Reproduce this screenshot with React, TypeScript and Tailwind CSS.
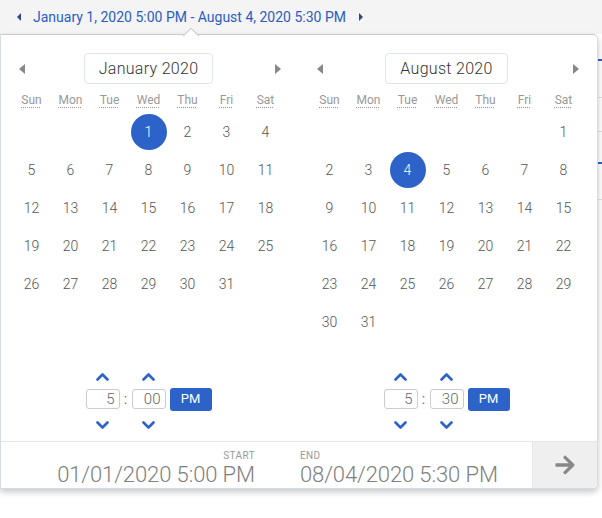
import React from 'react';
import { FaArrowRight } from 'react-icons/fa';

const BLUE = '#2d62c8';

function Caret({ dir, color, w = 5, h = 9 }: { dir: 'left' | 'right'; color: string; w?: number; h?: number }) {
  const pts = dir === 'left' ? `${w},0 0,${h / 2} ${w},${h}` : `0,0 ${w},${h / 2} 0,${h}`;
  return (
    <svg width={w} height={h} viewBox={`0 0 ${w} ${h}`}>
      <polygon points={pts} fill={color} />
    </svg>
  );
}

function Chevron({ up }: { up?: boolean }) {
  return (
    <svg width="13" height="9" viewBox="0 0 13 9">
      <polyline
        points={up ? '1.5,7.5 6.5,2.5 11.5,7.5' : '1.5,1.5 6.5,6.5 11.5,1.5'}
        fill="none"
        stroke={BLUE}
        strokeWidth="2.6"
        strokeLinecap="round"
        strokeLinejoin="round"
      />
    </svg>
  );
}

const DAYS = ['Sun', 'Mon', 'Tue', 'Wed', 'Thu', 'Fri', 'Sat'];

function Calendar({
  title,
  offset,
  count,
  selected,
  hour,
  minute,
}: {
  title: string;
  offset: number;
  count: number;
  selected: number;
  hour: string;
  minute: string;
}) {
  const cells: (number | null)[] = [];
  for (let i = 0; i < offset; i++) cells.push(null);
  for (let d = 1; d <= count; d++) cells.push(d);
  return (
    <div className="w-[299px] pl-[11px] pt-[18px] flex flex-col">
      <div className="w-[273px] h-[31px] flex items-center justify-between">
        <div className="w-[20px] flex justify-center">
          <Caret dir="left" color="#888" w={6} h={10} />
        </div>
        <div className="h-[31px] px-[14px] flex items-center border border-[#dfe5ec] rounded-[4px] text-[16px] font-light text-[#333] tracking-[0.3px]">
          {title}
        </div>
        <div className="w-[20px] flex justify-center pl-[6px]">
          <Caret dir="right" color="#888" w={6} h={10} />
        </div>
      </div>
      <div className="w-[273px] h-[29px] grid grid-cols-7 items-center">
        {DAYS.map((d) => (
          <div key={d} className="flex justify-center pt-[2px]">
            <span className="text-[12px] text-[#999] underline decoration-dotted underline-offset-[3px]">{d}</span>
          </div>
        ))}
      </div>
      <div className="w-[273px] h-[228px] grid grid-cols-7 auto-rows-[38px]">
        {cells.map((c, i) => (
          <div key={i} className="flex items-center justify-center">
            {c !== null &&
              (c === selected ? (
                <span className="w-[36px] h-[36px] rounded-full bg-[#2d62c8] text-white text-[14px] font-light flex items-center justify-center">
                  {c}
                </span>
              ) : (
                <span className="text-[14px] font-light text-[#555]">{c}</span>
              ))}
          </div>
        ))}
      </div>
      <div className="w-[273px] mt-[27px] flex flex-col items-center">
        <div className="flex items-center h-[16px]">
          <div className="w-[34px] flex justify-center">
            <Chevron up />
          </div>
          <div className="w-[12px]" />
          <div className="w-[34px] flex justify-center">
            <Chevron up />
          </div>
          <div className="w-[46px]" />
        </div>
        <div className="flex items-center h-[24px] mt-[3px]">
          <div className="w-[34px] h-[20px] border border-[#ccc] rounded-[3px] text-[15px] font-light text-[#666] text-right pr-[4px] leading-[18px]">
            {hour}
          </div>
          <div className="w-[12px] text-center text-[14px] text-[#666]">:</div>
          <div className="w-[34px] h-[20px] border border-[#ccc] rounded-[3px] text-[15px] font-light text-[#666] text-right pr-[4px] leading-[18px]">
            {minute}
          </div>
          <div className="ml-[4px] w-[42px] h-[23px] rounded-[3px] bg-[#2d62c8] text-white text-[13px] flex items-center justify-center">
            PM
          </div>
        </div>
        <div className="flex items-center h-[16px] mt-[6px]">
          <div className="w-[34px] flex justify-center">
            <Chevron />
          </div>
          <div className="w-[12px]" />
          <div className="w-[34px] flex justify-center">
            <Chevron />
          </div>
          <div className="w-[46px]" />
        </div>
      </div>
    </div>
  );
}

export default function App() {
  return (
    <div className="relative w-[602px] h-[518px] bg-white overflow-hidden" style={{ fontFamily: 'Roboto, "Noto Sans", sans-serif' }}>
      <div className="h-[34px] bg-[#f4f4f4] flex items-center pl-[17px]">
        <Caret dir="left" color="#2a4a86" w={4} h={8} />
        <span className="ml-[12px] text-[14px] text-[#2b5cc4]">January 1, 2020 5:00 PM - August 4, 2020 5:30 PM</span>
        <span className="ml-[13px]">
          <Caret dir="right" color="#2a4a86" w={4} h={8} />
        </span>
      </div>

      {/* background content peeking on the right */}
      <div className="absolute left-[590px] top-[59px] w-[12px] h-[2px] bg-[#2d62c8]" />
      <div className="absolute left-[590px] top-[97px] w-[12px] h-[1px] bg-[#dde2e8]" />
      <div className="absolute left-[590px] top-[131px] w-[12px] h-[1px] bg-[#dde2e8]" />
      <div className="absolute left-[590px] top-[162px] w-[12px] h-[2px] bg-[#2d62c8]" />
      <div className="absolute left-[590px] top-[199px] w-[12px] h-[1px] bg-[#dde2e8]" />

      {/* popover */}
      <div className="absolute left-0 top-[34px] w-[598px] bg-white border border-[#d6dce4] border-t-[#c9c9c9] rounded-r-[5px] shadow-[0_3px_6px_rgba(0,0,0,0.22)]">
        <div className="absolute left-[182px] top-[-7px] w-[16px] h-[8px] overflow-hidden">
          <div className="w-[12px] h-[12px] bg-white border border-[#c9c9c9] rotate-45 translate-x-[2px] translate-y-[2px]" />
        </div>
        <div className="flex">
          <Calendar title="January 2020" offset={3} count={31} selected={1} hour="5" minute="00" />
          <Calendar title="August 2020" offset={6} count={31} selected={4} hour="5" minute="30" />
        </div>
        <div className="mt-[8px] h-[47px] border-t border-[#e3e8ef] flex">
          <div className="w-[254px] flex flex-col items-end pt-[8px]">
            <span className="text-[10px] leading-[12px] text-[#999] tracking-[0.4px]">START</span>
            <span className="text-[22px] leading-[26px] font-light text-[#808080] tracking-[-0.1px]">01/01/2020 5:00 PM</span>
          </div>
          <div className="ml-[45px] w-[232px] flex flex-col items-start pt-[8px]">
            <span className="text-[10px] leading-[12px] text-[#999] tracking-[0.4px]">END</span>
            <span className="text-[22px] leading-[26px] font-light text-[#808080] tracking-[-0.1px]">08/04/2020 5:30 PM</span>
          </div>
          <div className="ml-auto w-[65px] bg-[#efefef] border-l border-[#e6e6e6] rounded-br-[5px] flex items-center justify-center">
            <FaArrowRight className="text-[#888] w-[22px] h-[22px]" />
          </div>
        </div>
      </div>
    </div>
  );
}
